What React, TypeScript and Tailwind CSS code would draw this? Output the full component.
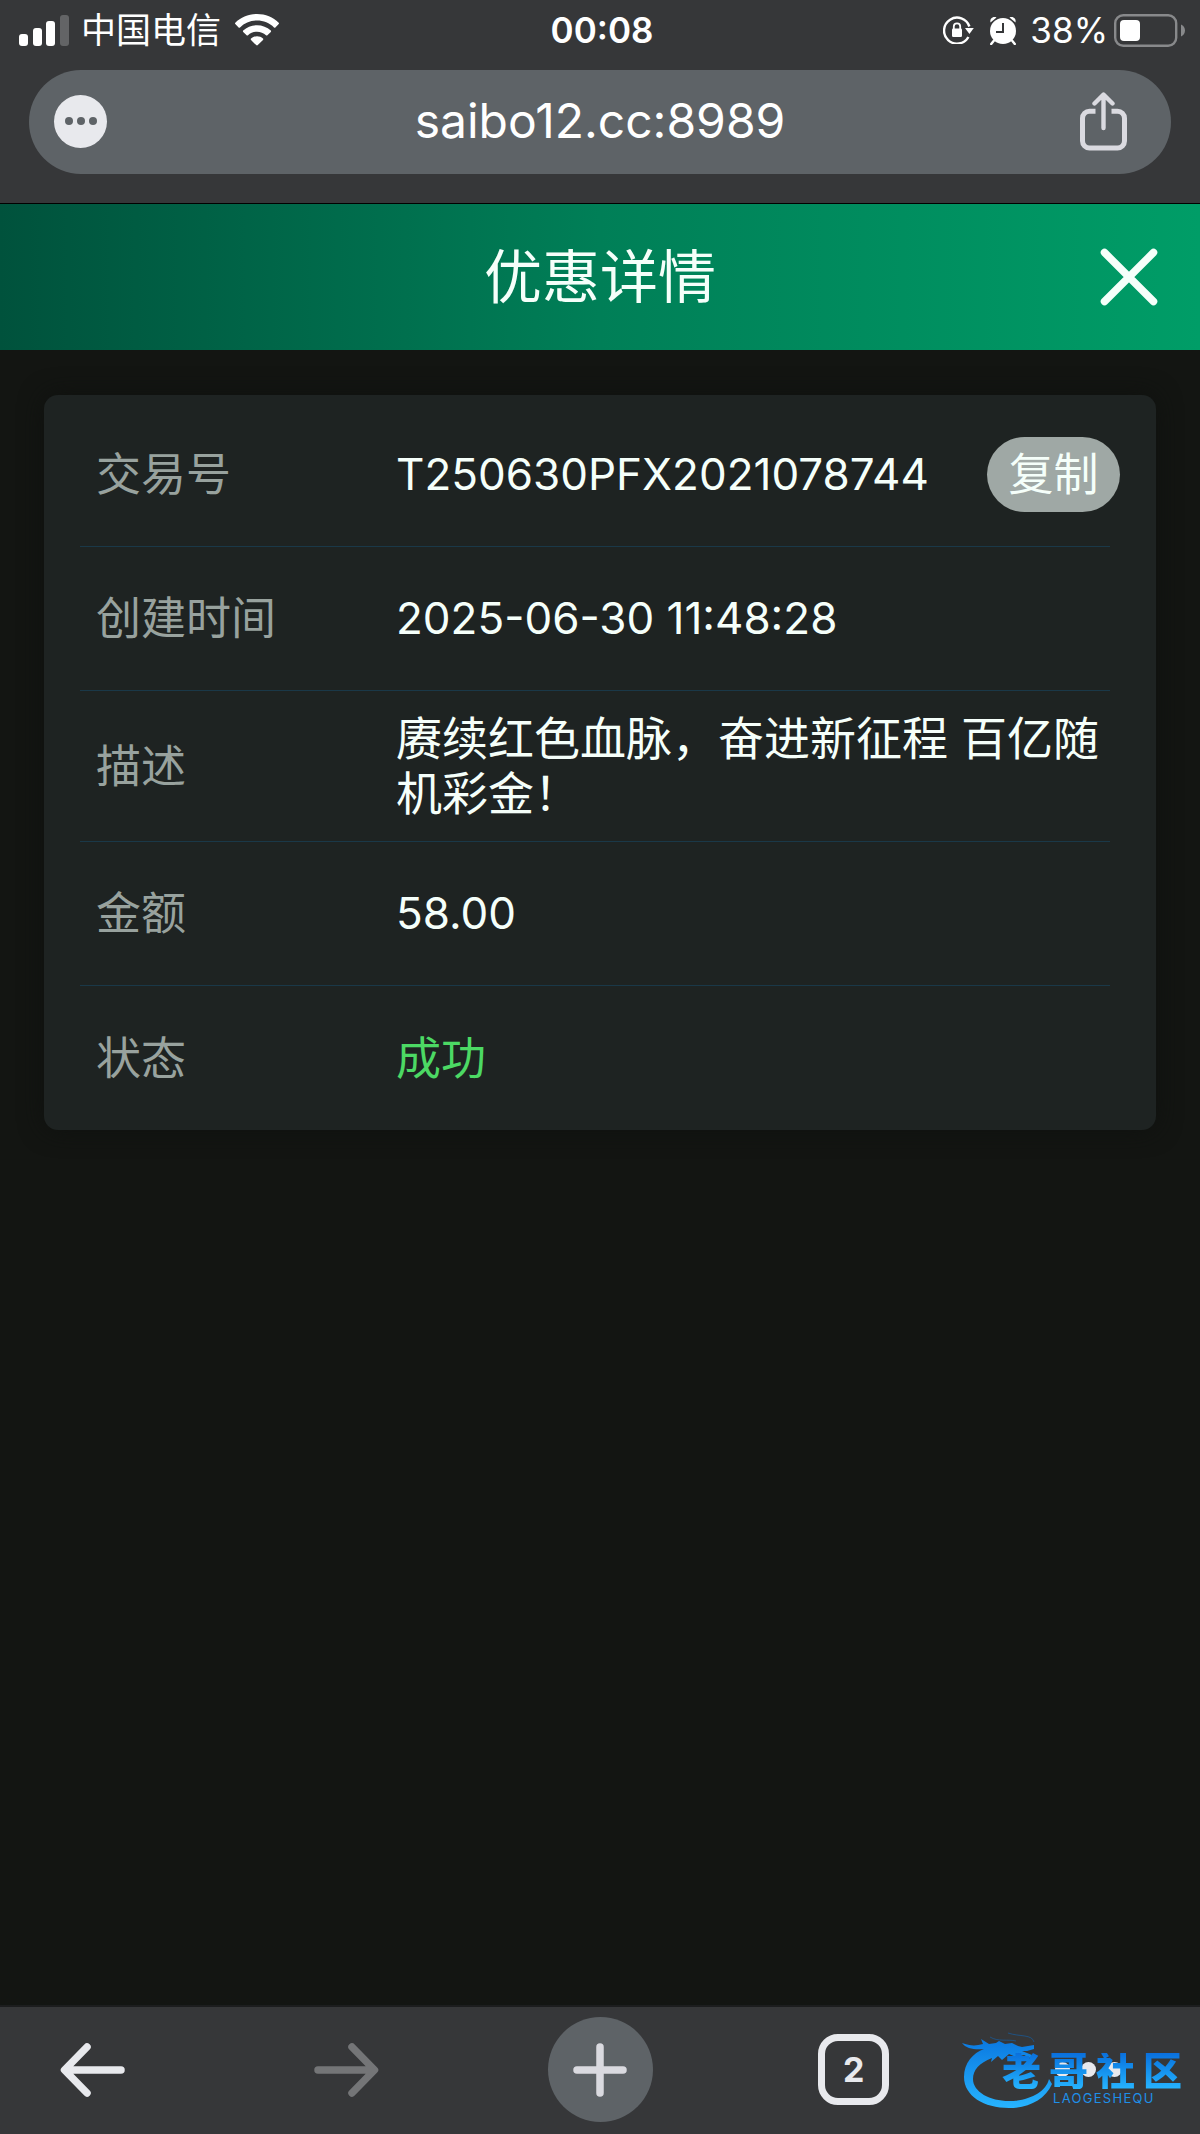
import { useState } from "react";

type Row = {
  label: string;
  value: string;
  copy?: boolean;
  className: string;
};

const rows: Row[] = [
  { label: "交易号", value: "T250630PFX2021078744", copy: true, className: "text-[44px] text-[#f5fffa]" },
  { label: "创建时间", value: "2025-06-30 11:48:28", className: "text-[44px] text-[#f5fffa]" },
  { label: "描述", value: "赓续红色血脉，奋进新征程 百亿随机彩金！", className: "text-[46px] text-[#f5fffa]" },
  { label: "金额", value: "58.00", className: "text-[44px] text-[#f5fffa]" },
  { label: "状态", value: "成功", className: "text-[#4cd964]" },
];

function StatusBar() {
  return (
    <div className="grid grid-cols-[1fr_auto_1fr] items-center h-[60px] pl-[19px] pr-[15px] text-white">
      <div className="flex items-center">
        <svg width="50" height="31" viewBox="0 0 50 31" fill="#fff" aria-hidden="true">
          <rect x="0" y="19" width="9" height="12" rx="3" />
          <rect x="14" y="13" width="9" height="18" rx="3" />
          <rect x="27" y="6" width="9" height="25" rx="3" />
          <rect x="41" y="0" width="9" height="31" rx="3" fill="#636466" />
        </svg>
        <span className="ml-3 text-[35px] leading-[60px]">中国电信</span>
        <svg className="ml-[14px]" width="44" height="32" viewBox="0 0 44 32" fill="#fff" aria-hidden="true">
          <path d="M22 0C13.500 0 5.800 3.300.3 8.700c-.4.400-.4 1 0 1.400l3.300 3.300c.4.400 1 .4 1.400 0C9.500 9.200 15.400 6.600 22 6.600s12.500 2.600 17 6.800c.4.400 1 .4 1.400 0l3.300-3.300c.4-.4.400-1 0-1.400C38.200 3.300 30.500 0 22 0z" />
          <path d="M22 11.200c-5.300 0-10.100 2-13.800 5.400-.4.400-.4 1 0 1.400l3.400 3.300c.4.400 1 .4 1.400 0 2.400-2.200 5.500-3.500 9-3.500s6.600 1.300 9 3.500c.4.400 1 .4 1.400 0l3.400-3.300c.4-.4.400-1 0-1.400-3.700-3.400-8.500-5.400-13.800-5.400z" />
          <path d="M22 22.200c-2.300 0-4.400.9-6 2.300-.4.400-.4 1 0 1.400l5.200 5.200c.5.500 1.100.5 1.600 0l5.200-5.200c.4-.4.400-1 0-1.400-1.600-1.400-3.700-2.300-6-2.300z" />
        </svg>
      </div>
      <span className="text-[35px] leading-[60px] font-semibold">00:08</span>
      <div className="flex items-center justify-end">
        <svg width="31" height="28" viewBox="0 0 31 28" fill="none" aria-hidden="true">
          <path d="M25.400 21A13 13 0 1 1 26.400 10.500" stroke="#fff" strokeWidth="2.400" />
          <path d="M22 12h8.800L26.400 18z" fill="#fff" />
          <rect x="9" y="12.500" width="10" height="8.500" rx="1.200" fill="#fff" />
          <path d="M10.800 13v-2.500a3.200 3.200 0 0 1 6.400 0V13" stroke="#fff" strokeWidth="1.800" />
        </svg>
        <svg className="ml-[15px]" width="28" height="29" viewBox="0 0 28 29" aria-hidden="true">
          <circle cx="14" cy="15" r="13" fill="#fff" />
          <path d="M1.500 6.500C.5 2.500 4 0 7.500 1.500zM26.500 6.500C27.500 2.500 24 0 20.500 1.500z" fill="#fff" />
          <path d="M5 24.500L2.200 28M23 24.500L25.800 28" stroke="#fff" strokeWidth="2.400" strokeLinecap="round" />
          <path d="M14 7v9H7" fill="none" stroke="#363739" strokeWidth="2" />
        </svg>
        <span className="ml-[13px] text-[35px] leading-[60px]">38%</span>
        <svg className="ml-[6px]" width="71" height="33" viewBox="0 0 71 33" aria-hidden="true">
          <rect x="1.200" y="1.200" width="61" height="30.600" rx="8" fill="none" stroke="#88898b" strokeWidth="2.400" />
          <rect x="6" y="6" width="20" height="21" rx="4" fill="#fff" />
          <path d="M67 10.500c2.300 1 4 3.200 4 6s-1.700 5-4 6z" fill="#88898b" />
        </svg>
      </div>
    </div>
  );
}

function AddressBar() {
  return (
    <div className="mx-[29px] mt-[10px] mb-[29px] h-[104px] rounded-full bg-[#5e6367] grid grid-cols-[1fr_auto_1fr] items-center px-[25px] pb-[2px]">
      <button type="button" aria-label="菜单" className="size-[53px] rounded-full bg-[#e8e9ed] flex items-center justify-center gap-1">
        <span className="size-2 rounded-full bg-[#5e6367]"></span>
        <span className="size-2 rounded-full bg-[#5e6367]"></span>
        <span className="size-2 rounded-full bg-[#5e6367]"></span>
      </button>
      <a href="#" className="text-[48px] leading-[60px] text-white">saibo12.cc:8989</a>
      <button type="button" aria-label="分享" className="justify-self-end pr-[19px]">
        <svg width="47" height="59" viewBox="0 0 47 59" fill="none" stroke="#dadae0" aria-hidden="true">
          <path d="M15.500 19.200H9.500a7 7 0 0 0-7 7V49a7 7 0 0 0 7 7h28a7 7 0 0 0 7-7V26.200a7 7 0 0 0-7-7h-6" strokeWidth="5" />
          <path d="M23.500 36V3.500M14.500 11.500l9-9 9 9" strokeWidth="4.400" strokeLinecap="round" strokeLinejoin="round" />
        </svg>
      </button>
    </div>
  );
}

function DetailRow({ row }: { row: Row }) {
  const [copied, setCopied] = useState<boolean>(false);

  function copyValue() {
    navigator.clipboard?.writeText(row.value);
    setCopied(true);
  }

  return (
    <div className="flex items-center min-h-36 py-5 pl-4 border-b border-[#1a3848] last:border-b-0">
      <dt className="w-[300px] shrink-0 text-[#98a29e]">{row.label}</dt>
      <dd className={`flex-1 ${row.className}`}>{row.value}</dd>
      {row.copy && (
        <dd className="-mr-[10px]">
          <button type="button" onClick={copyValue} aria-pressed={copied} className="w-[133px] h-[75px] rounded-full bg-[#9fa8a5] text-[#f5fffa]">复制</button>
        </dd>
      )}
    </div>
  );
}

// dragon ring with the site name, floats over the bottom bar
function Watermark() {
  return (
    <div className="absolute right-4 bottom-[23px] w-[222px] h-20 pointer-events-none">
      <svg width="92" height="80" viewBox="0 0 92 80" aria-hidden="true">
        <defs>
          <linearGradient id="ring" x1="0" y1="0" x2="0" y2="1">
            <stop offset="0" stopColor="#0a78e0" />
            <stop offset="1" stopColor="#27b4ff" />
          </linearGradient>
        </defs>
        <path fill="url(#ring)" d="M0 12C8 15 14 15 21 13L19 8L27 13L34 12L37 10L43 13L50 12L56 15L60 16L72 14L72 18L65 20L60 20L70 24L68 27L62 24L54 26L47 23L40 29L36 25L29 31L30 27C17 32 11 39 11 48C11 61 28 70 47 70C67 70 84 61 87 48L90 53C83 69 66 77 47 77C22 77 2 65 2 46C2 32 11 22 22 18C14 19 4 18 0 12Z" />
        <path d="M28 6C36 11 46 8 54 10M46 2C58 6 70 3 72 11" fill="none" stroke="#0a6cc8" strokeWidth="1" opacity="0.5" />
      </svg>
      <div className="absolute left-10 top-[22px] flex gap-2 text-[39px] leading-9 font-black bg-linear-to-b from-[#0b6fdc] to-[#27b4ff] bg-clip-text text-transparent">
        <span>老</span>
        <span>哥</span>
        <span>社</span>
        <span>区</span>
      </div>
      <span className="absolute left-[91px] top-[61px] text-[13px] leading-3 tracking-widest text-[#1e8fe8]">LAOGESHEQU</span>
    </div>
  );
}

function BottomBar() {
  return (
    <nav className="relative h-[129px] border-t-2 border-[#1c1d1e] bg-[#363739] px-10 pb-[2px] flex items-center justify-between">
      <button type="button" aria-label="后退" className="w-[105px] flex justify-center">
        <svg width="66" height="54" viewBox="0 0 66 54" fill="none" stroke="#e8e9ed" strokeWidth="7.500" strokeLinecap="round" strokeLinejoin="round" aria-hidden="true">
          <path d="M61 27H6M27 4L4.500 27 27 50" />
        </svg>
      </button>
      <button type="button" aria-label="前进" className="w-[105px] flex justify-center">
        <svg width="66" height="54" viewBox="0 0 66 54" fill="none" stroke="#747577" strokeWidth="7.500" strokeLinecap="round" strokeLinejoin="round" aria-hidden="true">
          <path d="M5 27h55M39 4l22.500 23L39 50" />
        </svg>
      </button>
      <button type="button" aria-label="新标签页" className="size-[105px] rounded-full bg-[#5e6367] flex items-center justify-center">
        <svg width="54" height="54" viewBox="0 0 54 54" stroke="#dadae0" strokeWidth="7.500" strokeLinecap="round" aria-hidden="true">
          <path d="M27 4v46M4 27h46" />
        </svg>
      </button>
      <button type="button" aria-label="标签页" className="w-[105px] flex justify-center">
        <span className="size-[71px] rounded-[20px] border-[7px] border-[#e8e9ed] text-[#e8e9ed] text-[34px] leading-[57px] font-bold">2</span>
      </button>
      <button type="button" aria-label="更多" className="w-[105px] flex gap-[11px]">
        <span className="size-[15px] rounded-full bg-[#e8e9ed]"></span>
        <span className="size-[15px] rounded-full bg-[#e8e9ed]"></span>
        <span className="size-[15px] rounded-full bg-[#e8e9ed]"></span>
      </button>
      <Watermark />
    </nav>
  );
}

function App() {
  return (
    <div className="min-h-screen flex flex-col bg-[#131512] font-['Inter','Noto_Sans_CJK_SC',sans-serif]">
      <div className="bg-[#363739] border-b border-black">
        <StatusBar />
        <AddressBar />
      </div>
      <header className="h-[146px] grid grid-cols-[1fr_auto_1fr] items-center px-[42px] bg-linear-to-r from-[#00523c] via-[#007f57] to-[#009d67] text-[#f5fffa]">
        <h1 className="col-start-2 text-[58px] leading-[80px]">优惠详情</h1>
        <button type="button" aria-label="关闭" className="justify-self-end">
          <svg width="58" height="58" viewBox="0 0 58 58" stroke="#f5fffa" strokeWidth="7.500" strokeLinecap="round" aria-hidden="true">
            <path d="M4.500 4.500l49 49M53.500 4.500l-49 49" />
          </svg>
        </button>
      </header>
      <main className="flex-1 px-11 pt-[45px]">
        <dl className="rounded-[14px] bg-[#1e2322] pl-9 pr-[46px] pt-2 text-[45px] leading-[55px] shadow-[0_0_24px_#0f110f]">
          {rows.map((row) => (
            <DetailRow key={row.label} row={row} />
          ))}
        </dl>
      </main>
      <BottomBar />
    </div>
  );
}

export default App;
